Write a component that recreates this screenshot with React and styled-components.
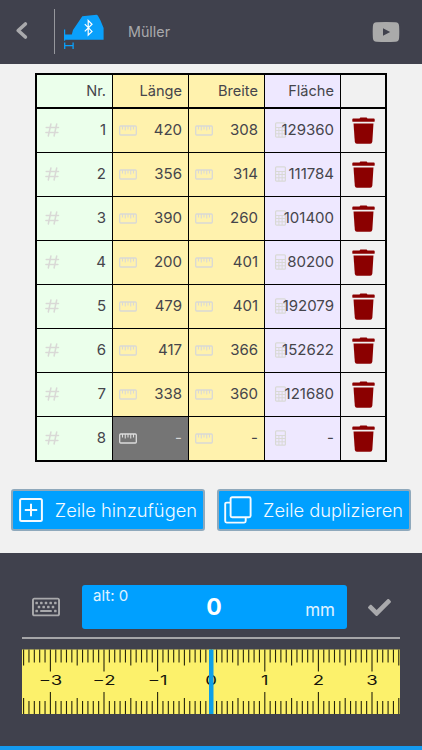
import styled, { createGlobalStyle, ThemeProvider } from 'styled-components'
import { FaCheck, FaRegKeyboard } from 'react-icons/fa'

const theme = {
    colors: {
        dark: '#40414d',
        page: '#f1f1f1',
        blue: '#00a0ff',
        grey: '#a9a9ac',
        green: '#ebffeb',
        yellow: '#fff2ad',
        violet: '#eee8ff',
        red: '#8b0000',
        active: '#757575',
        text: '#45454b',
    },
}

const GlobalStyle = createGlobalStyle`
    *{
        box-sizing: border-box;
    }
    body{
        margin: 0;
        font-family: Inter, 'Liberation Sans', sans-serif;
        background: ${props => props.theme.colors.page};
    }
    svg{
        display: block;
        flex: none;
    }
`

const Screen = styled.div`
    width: 422px;
    height: 750px;
    display: flex;
    flex-direction: column;
    overflow: hidden;
`

const Header = styled.header`
    height: 64px;
    flex: none;
    display: flex;
    align-items: center;
    padding: 0 22px 0 15px;
    background: ${props => props.theme.colors.dark};
    color: ${props => props.theme.colors.grey};

    .header{
        &__divider{
            width: 1px;
            height: 45px;
            margin: 0 9px 1px 26px;
            background: #96979d;
        }
        &__title{
            flex: 1;
            margin: 0 0 0 24px;
            font-size: 14.3px;
            font-weight: 400;
            line-height: 20px;
        }
    }
`

const Main = styled.main`
    height: 489px;
    flex: none;
    padding: 10px 11px 0;
`

const Table = styled.div`
    width: 352px;
    margin: -1px 0 0 24px;
    border: 2px solid #000;
    background: #000;
    display: flex;
    flex-direction: column;
    gap: 1px;
`

const Cell = styled.div`
    display: flex;
    align-items: center;
    padding: 0 6px 1px ${props => props.$pad || 6}px;
    background: ${props => props.theme.colors[props.$tone]};
    color: ${props => (props.$tone === 'active' ? '#d8d8d8' : props.theme.colors.text)};
    line-height: 20px;
    white-space: nowrap;

    svg{
        color: ${props => (props.$tone === 'active' ? '#dcdcdc' : '#d9d9d6')};
    }
    span{
        flex: 1;
        min-width: 0;
        display: flex;
        justify-content: flex-end;
    }
`

const Row = styled.div`
    display: grid;
    grid-template-columns: 75px 75px 75px 75px 44px;
    column-gap: 1px;
    height: ${props => (props.$head ? 32 : 43)}px;
    margin-bottom: ${props => (props.$head ? 1 : 0)}px;

    ${Cell}{
        font-size: ${props => (props.$head ? 14.6 : 15)}px;
        padding-bottom: ${props => (props.$head ? 0 : 1)}px;
    }
`

const DeleteButton = styled.button`
    display: flex;
    align-items: center;
    justify-content: center;
    border: 0;
    padding: 0 0 1px;
    background: ${props => props.theme.colors.page};
    color: ${props => props.theme.colors.red};
`

const Actions = styled.div`
    display: flex;
    justify-content: space-between;
    margin-top: 27px;
`

const ActionButton = styled.button`
    width: 194px;
    height: 42px;
    display: flex;
    align-items: center;
    justify-content: space-between;
    padding: 0 6px 0 ${props => props.$pad}px;
    border: 2px solid #8fa9bc;
    border-radius: 3px;
    background: ${props => props.theme.colors.blue};
    color: #f4faff;
    font-family: inherit;
    font-size: 18.3px;
    font-weight: 300;
    white-space: nowrap;
`

const Panel = styled.footer`
    flex: 1;
    padding: 32px 22px 0;
    border-bottom: 4px solid #149af0;
    background: ${props => props.theme.colors.dark};
`

const Measure = styled.div`
    display: flex;
    align-items: center;
    padding: 0 8px 0 10px;
    color: ${props => props.theme.colors.grey};
`

const Display = styled.div`
    width: 265px;
    height: 44px;
    margin: 0 21px 0 22px;
    display: grid;
    grid-template-columns: 1fr 40px 1fr;
    padding: 0 12px 0 11px;
    border-radius: 3px;
    background: ${props => props.theme.colors.blue};
    color: #fff;

    .display{
        &__old{
            font-size: 15px;
            line-height: 21px;
            color: #e0f3ff;
        }
        &__value{
            font-size: 23px;
            font-weight: 700;
            line-height: 45px;
            text-align: center;
        }
        &__unit{
            padding-top: 14px;
            font-size: 17px;
            line-height: 22px;
            text-align: right;
            color: #e0f3ff;
        }
    }
`

const Line = styled.div`
    height: 2px;
    margin: 8px 0 10px;
    background: #a5a5a8;
`

const rows = [
    ['1', '420', '308', '129360'],
    ['2', '356', '314', '111784'],
    ['3', '390', '260', '101400'],
    ['4', '200', '401', '80200'],
    ['5', '479', '401', '192079'],
    ['6', '417', '366', '152622'],
    ['7', '338', '360', '121680'],
    ['8', '-', '-', '-'],
]

const BackIcon = () => (
    <svg width="13" height="22" viewBox="0 0 13 22" fill="none" stroke="currentColor" strokeWidth="3.6" strokeLinejoin="round">
        <path d="M10.4 3 3.2 9.5l7.2 6.500" strokeLinecap="round" />
    </svg>
)

const HashIcon = () => (
    <svg width="15" height="14" viewBox="0 0 15 14" fill="none" stroke="currentColor" strokeWidth="1.5" strokeLinecap="round">
        <path d="M5.9 1 3.3 13M11.700 1 9.100 13M1.200 4.600h12.300M.9 9.500h12" />
    </svg>
)

const RulerIcon = () => (
    <svg width="18" height="11" viewBox="0 0 18 11" fill="none" stroke="currentColor" strokeWidth="1.3">
        <rect x=".7" y="1" width="16.6" height="9" rx="1" />
        <path d="M3.5 1v3.5M6.25 1v4.5M9 1v3.5M11.75 1v4.5M14.5 1v3.5" strokeWidth="1.1" />
    </svg>
)

const CalculatorIcon = () => (
    <svg width="11" height="16" viewBox="0 0 11 16" fill="none" stroke="currentColor">
        <rect x=".6" y=".8" width="9.8" height="14.4" rx="1" strokeWidth="1.2" />
        <path d="M.6 5.5h9.8M.6 8.5h9.8M.6 11.8h9.800M3.900 5.500v9.500M7.100 5.500v9.500" strokeWidth="1" />
    </svg>
)

const TrashIcon = () => (
    <svg width="23" height="27" viewBox="0 0 23 27" fill="currentColor">
        <path d="M7.5 1.6 8.400.4h6.200l.9 1.200h6.300q.9 0 .9.8v1.500q0 .9-.9.9H1.200q-.9 0-.9-.9V2.400q0-.8.9-.8z" />
        <path d="M1.500 6.400h20l-1.200 18.300q-.2 2-2.100 2H4.900q-1.900 0-2.100-2z" />
    </svg>
)

const Logo = () => (
    <svg width="40" height="36" viewBox="0 0 40 36">
        <path
            fill="#0aa0fb"
            d="M0 15.500h1.200v5h6.600l1.200-4.600L18.300 2.200 32.600.8l1.200.8 2.700 4.900L39.600 14v11.800H1.200v1H0z"
        />
        <path d="M.7 28.500v6.500M9.100 28.500v6.500M.7 31.700h8.400" stroke="#0aa0fb" strokeWidth="1.3" fill="none" />
        <path d="M20.800 10.200l7.200 7.200-3.800 3.700V6.500l3.800 3.700-7.200 7.200" stroke="#fff" strokeWidth="1.2" fill="none" />
    </svg>
)

const VideoIcon = () => (
    <svg width="28" height="20" viewBox="0 0 28 20">
        <path
            fill="#aaa"
            fillRule="evenodd"
            d="M4.500.3Q14-.1 23.500.3 27 .5 27.100 4q.4 6 0 12-.1 3.500-3.600 3.700-9.500.4-19 0Q1 19.500.9 16q-.4-6 0-12Q1 .5 4.500.3zM11 6.200v7.600l7.200-3.800z"
        />
    </svg>
)

const AddIcon = () => (
    <svg width="24" height="24" viewBox="0 0 24 24" fill="none" stroke="currentColor" strokeWidth="2">
        <rect x="1.1" y="1.1" width="21.8" height="21.8" rx="1.5" />
        <path d="M12 5.800v12.400M5.800 12h12.400" />
    </svg>
)

const CopyIcon = () => (
    <svg width="28" height="28" viewBox="0 0 28 28" fill="none" stroke="currentColor" strokeWidth="1.9">
        <rect x="6.6" y="1.2" width="20" height="20" rx="1.5" />
        <path d="M6.600 6.600H2.700q-1.500 0-1.500 1.500v17q0 1.500 1.500 1.500h17.500q1.500 0 1.500-1.500v-3.900" />
    </svg>
)

const ZERO = 189.2
const STEP = 5.36

const Ruler = () => {
    const ticks = []
    for (let i = -35; i <= 35; i++) {
        let length = 13
        if (i % 10 === 0) length = 22
        else if (i % 5 === 0) length = 16
        ticks.push({ i, x: ZERO + i * STEP, length })
    }

    return (
        <svg width="378" height="65" viewBox="0 0 378 65">
            <rect y=".5" width="378" height="64.5" fill="#fcf16b" />
            {ticks.map(({ i, x, length }) => (
                <path key={i} d={`M${x} .5v${length}M${x} 65v${-length}`} stroke="#26240c" strokeWidth="1.1" />
            ))}
            {[-3, -2, -1, 0, 1, 2, 3].map(n => (
                <text
                    key={n}
                    transform={`translate(${ZERO + n * 10 * STEP} 35.7) scale(1.45 1)`}
                    textAnchor="middle"
                    fontSize="12.8"
                    fill="#15150c"
                >
                    {n < 0 ? `−${-n}` : n}
                </text>
            ))}
            <rect x="187" y=".5" width="4.5" height="64.5" fill="#0d9fe8" />
        </svg>
    )
}

const App = () => (
    <ThemeProvider theme={theme}>
        <GlobalStyle />
        <Screen>
            <Header>
                <BackIcon />
                <div className="header__divider" />
                <Logo />
                <h1 className="header__title">Müller</h1>
                <VideoIcon />
            </Header>

            <Main>
                <Table>
                    <Row $head>
                        <Cell $tone="green"><span>Nr.</span></Cell>
                        <Cell $tone="yellow"><span>Länge</span></Cell>
                        <Cell $tone="yellow"><span>Breite</span></Cell>
                        <Cell $tone="violet"><span>Fläche</span></Cell>
                        <Cell $tone="page" />
                    </Row>
                    {rows.map(([nr, length, width, area]) => (
                        <Row key={nr}>
                            <Cell $tone="green" $pad={8}><HashIcon /><span>{nr}</span></Cell>
                            <Cell $tone={length === '-' ? 'active' : 'yellow'}><RulerIcon /><span>{length}</span></Cell>
                            <Cell $tone="yellow"><RulerIcon /><span>{width}</span></Cell>
                            <Cell $tone="violet" $pad={10}><CalculatorIcon /><span>{area}</span></Cell>
                            <DeleteButton><TrashIcon /></DeleteButton>
                        </Row>
                    ))}
                </Table>

                <Actions>
                    <ActionButton $pad={6}><AddIcon />Zeile hinzufügen</ActionButton>
                    <ActionButton $pad={5}><CopyIcon />Zeile duplizieren</ActionButton>
                </Actions>
            </Main>

            <Panel>
                <Measure>
                    <FaRegKeyboard size={28} />
                    <Display>
                        <div className="display__old">alt: 0</div>
                        <div className="display__value">0</div>
                        <div className="display__unit">mm</div>
                    </Display>
                    <FaCheck size={23} />
                </Measure>
                <Line />
                <Ruler />
            </Panel>
        </Screen>
    </ThemeProvider>
)

export default App
